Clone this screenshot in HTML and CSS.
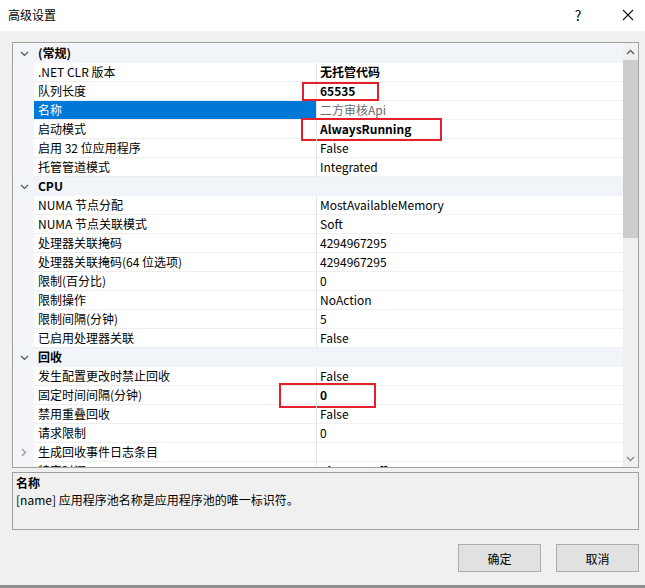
FILE: index.html
```html
<!DOCTYPE html>
<html lang="zh-CN">
<head>
<meta charset="utf-8">
<title>高级设置</title>
<link rel="stylesheet" href="styles.css">
</head>
<body>
<div class="window">
  <div class="titlebar">
    <span class="title">高级设置</span>
    <span class="help">?</span>
    <span class="close"><svg width="12" height="12" viewBox="0 0 12 12"><path d="M1 1 L11 11 M11 1 L1 11" stroke="#111" stroke-width="1.1" fill="none"/></svg></span>
  </div>
  <div class="content">
    <div class="grid">
      <div class="rows">
        <div class="row cat"><span class="gut"><svg class="chev-d" width="9" height="6" viewBox="0 0 9 6"><path d="M1 1 L4.5 4.5 L8 1" stroke="#555" stroke-width="1.2" fill="none"/></svg></span><span class="cat-label">(常规)</span></div>
        <div class="row"><span class="gut"></span><span class="label">.NET CLR 版本</span><span class="value bold">无托管代码</span></div>
        <div class="row"><span class="gut"></span><span class="label">队列长度</span><span class="value bold">65535</span><span class="mark m1"></span></div>
        <div class="row sel"><span class="gut"></span><span class="label">名称</span><span class="value dim">二方审核Api</span></div>
        <div class="row"><span class="gut"></span><span class="label">启动模式</span><span class="value bold">AlwaysRunning</span><span class="mark m2"></span></div>
        <div class="row"><span class="gut"></span><span class="label">启用 32 位应用程序</span><span class="value">False</span></div>
        <div class="row"><span class="gut"></span><span class="label">托管管道模式</span><span class="value">Integrated</span></div>
        <div class="row cat"><span class="gut"><svg class="chev-d" width="9" height="6" viewBox="0 0 9 6"><path d="M1 1 L4.5 4.5 L8 1" stroke="#555" stroke-width="1.2" fill="none"/></svg></span><span class="cat-label">CPU</span></div>
        <div class="row"><span class="gut"></span><span class="label">NUMA 节点分配</span><span class="value">MostAvailableMemory</span></div>
        <div class="row"><span class="gut"></span><span class="label">NUMA 节点关联模式</span><span class="value">Soft</span></div>
        <div class="row"><span class="gut"></span><span class="label">处理器关联掩码</span><span class="value">4294967295</span></div>
        <div class="row"><span class="gut"></span><span class="label">处理器关联掩码(64 位选项)</span><span class="value">4294967295</span></div>
        <div class="row"><span class="gut"></span><span class="label">限制(百分比)</span><span class="value">0</span></div>
        <div class="row"><span class="gut"></span><span class="label">限制操作</span><span class="value">NoAction</span></div>
        <div class="row"><span class="gut"></span><span class="label">限制间隔(分钟)</span><span class="value">5</span></div>
        <div class="row"><span class="gut"></span><span class="label">已启用处理器关联</span><span class="value">False</span></div>
        <div class="row cat"><span class="gut"><svg class="chev-d" width="9" height="6" viewBox="0 0 9 6"><path d="M1 1 L4.5 4.5 L8 1" stroke="#555" stroke-width="1.2" fill="none"/></svg></span><span class="cat-label">回收</span></div>
        <div class="row"><span class="gut"></span><span class="label">发生配置更改时禁止回收</span><span class="value">False</span></div>
        <div class="row"><span class="gut"></span><span class="label">固定时间间隔(分钟)</span><span class="value bold">0</span><span class="mark m3"></span></div>
        <div class="row"><span class="gut"></span><span class="label">禁用重叠回收</span><span class="value">False</span></div>
        <div class="row"><span class="gut"></span><span class="label">请求限制</span><span class="value">0</span></div>
        <div class="row"><span class="gut"><svg class="chev-r" width="6" height="9" viewBox="0 0 6 9"><path d="M1 1 L4.5 4.5 L1 8" stroke="#999" stroke-width="1.2" fill="none"/></svg></span><span class="label">生成回收事件日志条目</span><span class="value"></span></div>
        <div class="row"><span class="gut"><svg class="chev-r" width="6" height="9" viewBox="0 0 6 9"><path d="M1 1 L4.5 4.5 L1 8" stroke="#999" stroke-width="1.2" fill="none"/></svg></span><span class="label">特定时间</span><span class="value bold">TimeSpan[] Array</span></div>
      </div>
      <div class="scrollbar">
        <div class="sb-btn"><svg width="9" height="6" viewBox="0 0 9 6"><path d="M1 5 L4.5 1.5 L8 5" stroke="#606060" stroke-width="1.4" fill="none"/></svg></div>
        <div class="sb-thumb"></div>
        <div class="sb-track"></div>
        <div class="sb-btn"><svg width="9" height="6" viewBox="0 0 9 6"><path d="M1 1 L4.5 4.5 L8 1" stroke="#8a8a8a" stroke-width="1.4" fill="none"/></svg></div>
      </div>
    </div>
    <div class="desc">
      <div class="desc-title">名称</div>
      <div class="desc-text">[name] 应用程序池名称是应用程序池的唯一标识符。</div>
    </div>
    <div class="buttons">
      <button class="btn">确定</button>
      <button class="btn">取消</button>
    </div>
  </div>
</div>
</body>
</html>
```
FILE: styles.css
```css
* { box-sizing: border-box; }
html, body { margin: 0; padding: 0; }
body {
  width: 645px;
  height: 588px;
  background: #f0f0f0;
  font-family: "Noto Sans CJK SC", "Noto Sans", sans-serif;
  font-size: 12px;
  color: #000;
  overflow: hidden;
}
.window {
  height: 588px;
  display: flex;
  flex-direction: column;
  border-bottom: 3px solid #8f8f8f;
}
.titlebar {
  height: 31px;
  background: #fff;
  display: flex;
  align-items: center;
  padding-left: 8px;
  flex: none;
}
.title { flex: 1; font-size: 12px; line-height: 16px; padding-bottom: 2px; }
.help { width: 16px; text-align: center; font-size: 14px; margin-right: 36px; padding-bottom: 2px; }
.close { width: 12px; height: 12px; margin-right: 11px; display: flex; margin-bottom: 2px; }

.content {
  flex: 1;
  display: flex;
  flex-direction: column;
  padding: 11px 6px 0 12px;
}
.grid {
  height: 426px;
  border: 1px solid #a0a0a0;
  background: #fff;
  display: flex;
  flex: none;
}
.rows {
  flex: 1;
  overflow: hidden;
  padding-top: 1px;
  display: flex;
  flex-direction: column;
}
.row {
  position: relative;
  display: flex;
  height: 19px;
  flex: none;
  line-height: 18px;
}
.gut {
  width: 21px;
  flex: none;
  background: #f3f5f9;
  display: flex;
  align-items: center;
  justify-content: center;
  padding-left: 1px;
}
.label {
  width: 283px;
  flex: none;
  padding-left: 4px;
  border-bottom: 1px solid #eeeeee;
  border-right: 1px solid #e6e6e6;
  white-space: nowrap;
  overflow: hidden;
}
.value {
  flex: 1;
  padding-left: 3px;
  border-bottom: 1px solid #f0f0f0;
  white-space: nowrap;
}
.bold { font-weight: 700; }
.dim { color: #6d6d6d; }
.sel .label { background: #0078d7; color: #fff; }
.cat { background: #f1f4f9; }
.cat .gut { background: transparent; }
.cat-label {
  font-weight: 700;
  padding-left: 4px;
  flex: 1;
}
.chev-d { margin-top: 0; }
.mark {
  position: absolute;
  border: 2px solid #e5202a;
  pointer-events: none;
}
.m1 { left: 289px; top: 0; width: 77px; height: 19px; }
.m2 { left: 288px; top: -2px; width: 141px; height: 23px; }
.m3 { left: 266px; top: -3px; width: 97px; height: 25px; }

.scrollbar {
  width: 15px;
  flex: none;
  background: #f0f0f0;
  display: flex;
  flex-direction: column;
}
.sb-btn {
  height: 17px;
  flex: none;
  display: flex;
  align-items: center;
  justify-content: center;
}
.sb-thumb {
  height: 178px;
  flex: none;
  background: #cdcdcd;
}
.sb-track { flex: 1; }

.desc {
  margin-top: 4px;
  height: 58px;
  border: 1px solid #a0a0a0;
  background: #f0f0f0;
  padding: 1px 3px 0;
  line-height: 17px;
  flex: none;
}
.desc-title { font-weight: 700; }
.buttons {
  margin-top: 14px;
  display: flex;
  justify-content: flex-end;
  gap: 15px;
}
.btn {
  width: 83px;
  height: 28px;
  border: 1px solid #adadad;
  background: #e1e1e1;
  font-family: "Noto Sans CJK SC", sans-serif;
  font-size: 12px;
  color: #000;
  padding: 0;
}
```
